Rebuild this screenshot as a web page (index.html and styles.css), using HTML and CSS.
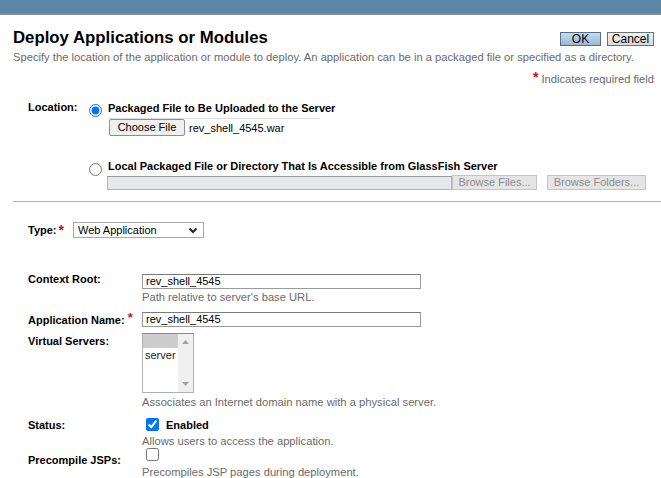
FILE: index.html
```html
<!DOCTYPE html>
<html>
<head>
<meta charset="utf-8">
<link rel="stylesheet" href="styles.css">
</head>
<body>
<div class="topbar"></div>
<div class="page">
  <div class="header">
    <h1>Deploy Applications or Modules</h1>
    <div class="actions">
      <button class="btn btn-ok">OK</button>
      <button class="btn btn-cancel">Cancel</button>
    </div>
  </div>
  <p class="intro">Specify the location of the application or module to deploy. An application can be in a packaged file or specified as a directory.</p>
  <div class="req"><span class="star">*</span> Indicates required field</div>

  <div class="location">
    <div class="lbl loc-lbl">Location:</div>
    <div class="opts">
      <div class="opt">
        <input class="radio" type="radio" name="loc" checked>
        <div class="opt-body">
          <div class="opt-title">Packaged File to Be Uploaded to the Server</div>
          <div class="rule"></div>
          <div class="file-row">
            <span class="choose">Choose File</span>
            <span class="fname">rev_shell_4545.war</span>
          </div>
        </div>
      </div>
      <div class="opt opt2">
        <input class="radio" type="radio" name="loc">
        <div class="opt-body">
          <div class="opt-title">Local Packaged File or Directory That Is Accessible from GlassFish Server</div>
        </div>
      </div>
      <div class="browse-row">
        <span class="dis-field"></span>
        <span class="dis-btn w-files">Browse Files...</span>
        <span class="dis-btn w-folders">Browse Folders...</span>
      </div>
    </div>
  </div>
</div>
<div class="sep"></div>
<div class="page">
  <div class="type-row">
    <span class="lbl">Type:</span><span class="star star-lbl">*</span>
    <div class="select">
      <span>Web Application</span>
      <svg width="10" height="7" viewBox="0 0 10 7"><polyline points="1.5,1.5 5,5 8.5,1.5" fill="none" stroke="#222" stroke-width="2"/></svg>
    </div>
  </div>

  <div class="props">
    <div class="lbl r-ctx">Context Root:</div>
    <div class="val r-ctx">
      <div class="tf">rev_shell_4545</div>
      <div class="help">Path relative to server's base URL.</div>
    </div>

    <div class="lbl r-app">Application Name: <span class="star">*</span></div>
    <div class="val r-app">
      <div class="tf">rev_shell_4545</div>
    </div>

    <div class="lbl r-vs">Virtual Servers:</div>
    <div class="val r-vs">
      <div class="listbox">
        <div class="lb-items">
          <div class="lb-sel"></div>
          <div class="lb-item">server</div>
        </div>
        <div class="lb-scroll">
          <svg width="7" height="4" viewBox="0 0 7 4"><polygon points="0,4 7,4 3.5,0" fill="#a3a3a3"/></svg>
          <svg width="7" height="4" viewBox="0 0 7 4"><polygon points="0,0 7,0 3.5,4" fill="#a3a3a3"/></svg>
        </div>
      </div>
      <div class="help">Associates an Internet domain name with a physical server.</div>
    </div>

    <div class="lbl r-st">Status:</div>
    <div class="val r-st">
      <div class="cb-row"><input class="cb" type="checkbox" checked><span class="cb-lbl">Enabled</span></div>
      <div class="help">Allows users to access the application.</div>
    </div>

    <div class="lbl r-pre">Precompile JSPs:</div>
    <div class="val r-pre">
      <div class="cb-row"><input class="cb" type="checkbox"></div>
      <div class="help">Precompiles JSP pages during deployment.</div>
    </div>
  </div>
</div>
</body>
</html>
```

FILE: styles.css
```css
* { box-sizing: border-box; }
html, body { height: 100%; }
body {
  margin: 0;
  font-family: "Liberation Sans", Arial, sans-serif;
  font-size: 11px;
  color: #000;
  background: #fff;
  overflow: hidden;
}
.topbar {
  height: 15px;
  background: #5c87a7;
  border-bottom: 2px solid #8a8a8a;
}
.page { padding: 0 7px 0 13px; }
.header {
  display: flex;
  justify-content: space-between;
  align-items: flex-start;
  margin-top: 13px;
}
h1 {
  margin: 0;
  font-size: 16.8px;
  line-height: 20px;
  font-weight: bold;
}
.actions { display: flex; gap: 6px; margin-top: 4px; }
.btn {
  height: 14px;
  padding: 0;
  font: 12px/12px "Liberation Sans", Arial, sans-serif;
  color: #000;
  border: 1px solid #6f6f6f;
  border-radius: 0;
  background: linear-gradient(#f2f2f2, #dadada);
}
.btn-ok {
  width: 41px;
  border-color: #4f6f8d;
  background: linear-gradient(#c7dbea, #97b9d4);
}
.btn-cancel { width: 47px; }
.intro {
  margin: 2px 0 0;
  font-size: 11.2px;
  line-height: 14px;
  color: #6a6a6a;
}
.req {
  margin-top: 8px;
  text-align: right;
  line-height: 14px;
  font-size: 11.2px;
  color: #6a6a6a;
}
.star {
  color: #cc1111;
  font-size: 14px;
  font-weight: bold;
  vertical-align: top;
  line-height: 10px;
}
.lbl { font-weight: bold; line-height: 14px; }

.location {
  display: flex;
  margin-top: 14px;
  padding-left: 15px;
}
.loc-lbl { width: 61px; flex: none; margin-top: 0; }
.opts { display: flex; flex-direction: column; margin-top: 1px; }
.opt { display: flex; align-items: flex-start; }
.radio {
  width: 13px;
  height: 13px;
  margin: 3px 6px 0 0;
  flex: none;
}
.opt-title { font-weight: bold; line-height: 14px; }
.rule {
  width: 212px;
  height: 1px;
  margin-top: 3px;
  background: #dcdcdc;
}
.file-row {
  display: flex;
  align-items: center;
  gap: 4px;
  padding-left: 1px;
}
.choose {
  display: inline-block;
  width: 76px;
  height: 17px;
  line-height: 15px;
  text-align: center;
  font-size: 11px;
  background: #efefef;
  border: 1px solid #8e8e8e;
  border-radius: 2px;
}
.fname { font-size: 11px; }
.opt2 { margin-top: 23px; }
.opt2 .radio { margin-top: 4px; }
.browse-row {
  display: flex;
  align-items: center;
  margin-left: 18px;
  margin-top: -1px;
}
.dis-field {
  width: 345px;
  height: 14px;
  background: #e7e8ea;
  border: 1px solid #b4b4b4;
  border-top-color: #9a9a9a;
}
.dis-btn {
  height: 15px;
  line-height: 13px;
  text-align: center;
  font-size: 11px;
  color: #8c8c8c;
  background: #e5e5e5;
  border: 1px solid #c4c4c4;
}
.w-files { width: 85px; }
.w-folders { width: 99px; margin-left: 10px; }

.sep {
  height: 1px;
  background: #a8aeb4;
  margin: 11px 0 0 13px;
}

.type-row {
  display: flex;
  align-items: flex-end;
  margin-top: 20px;
  padding-left: 15px;
}
.type-row .lbl { line-height: 14px; margin-bottom: 1px; }
.star-lbl { margin-left: 2px; align-self: flex-start; margin-top: 3px; }
.select {
  display: flex;
  align-items: center;
  justify-content: space-between;
  width: 131px;
  height: 16px;
  margin-left: 9px;
  padding: 0 5px 0 4px;
  border: 1px solid #a8a8a8;
  background: #fff;
  line-height: 14px;
}

.props {
  display: grid;
  grid-template-columns: 114px 1fr;
  padding-left: 15px;
  margin-top: 34px;
}
.val { display: flex; flex-direction: column; align-items: flex-start; }
.help { color: #6a6a6a; line-height: 14px; font-size: 11.2px; }
.tf {
  width: 279px;
  height: 15px;
  line-height: 13px;
  padding-left: 3px;
  border: 1px solid #9a9a9a;
  border-top-color: #7a7a7a;
  background: #fff;
}
.r-ctx.lbl { margin-top: 0; }
.r-ctx.val { margin-top: 2px; }
.r-ctx .help { margin-top: 1px; }
.r-app { margin-top: 8px; }
.r-app.lbl { margin-top: 9px; }
.r-app .star { font-size: 13px; }
.r-vs { margin-top: 6px; }
.r-vs.lbl { margin-top: 7px; }
.listbox {
  display: flex;
  width: 52px;
  height: 60px;
  border: 1px solid #b0b0b0;
  border-top-color: #8a8a8a;
  background: #fff;
}
.lb-items { flex: 1; }
.lb-sel { height: 14px; background: #cdcdcd; }
.lb-item { line-height: 14px; padding-left: 2px; color: #222; }
.lb-scroll {
  width: 15px;
  background: #f0f0f0;
  display: flex;
  flex-direction: column;
  justify-content: space-between;
  align-items: center;
  padding: 6px 0 6px;
}
.r-vs .help { margin-top: 2px; }
.r-st { margin-top: 7px; }
.r-st.lbl { margin-top: 9px; }
.cb-row { display: flex; align-items: center; height: 17px; }
.cb {
  width: 13px;
  height: 13px;
  margin: 0 7px 0 4px;
}
.cb-lbl { font-weight: bold; }
.r-st .help { margin-top: 1px; }
.r-pre { margin-top: 0; }
.r-pre.lbl { margin-top: 5px; }
.r-pre .cb-row { height: 15px; align-items: flex-start; }
.r-pre .help { margin-top: 2px; }
```
